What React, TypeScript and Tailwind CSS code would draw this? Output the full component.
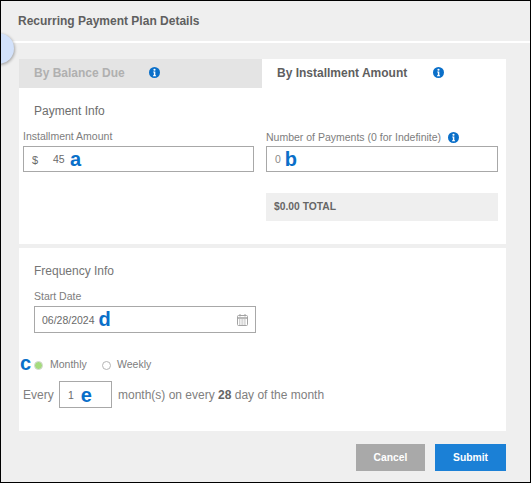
const font = "font-['Liberation_Sans',Arial,sans-serif]";

function Info({ size = 11 }: { size?: number }) {
  return (
    <svg width={size} height={size} viewBox="0 0 12 12" className="shrink-0">
      <circle cx="6" cy="6" r="6" fill="#0a6fc9" />
      <circle cx="6" cy="3" r="1.2" fill="#fff" />
      <path d="M4.6 5h2.3v4h.8v1H4.4V9h.9V6h-.7z" fill="#fff" />
    </svg>
  );
}

function Mark({ children }: { children: string }) {
  return <span className="text-[20px] leading-none font-bold text-[#0a6fc9] relative top-[-1px]">{children}</span>;
}

export default function App() {
  return (
    <div className={`${font} relative w-[531px] h-[483px] overflow-hidden bg-[#efefef] border-t border-l border-r border-b border-black text-[#757575]`}>
      <div className="absolute left-[-18px] top-[32px] w-[31px] h-[31px] rounded-full bg-[#d3e2fb] shadow-[1px_1px_3px_rgba(0,0,0,0.3)]" />
      <div className="h-[40px] pl-[17px] flex items-center text-[12px] font-bold text-[#5f5f5f] border-b-[2px] border-white box-content">
        Recurring Payment Plan Details
      </div>
      <div className="ml-[18px] mr-[24px] mt-[16px]">
        <div className="bg-white">
          <div className="flex h-[29px]">
            <div className="w-[243px] bg-[#e4e4e4] flex items-center pl-[15px] pb-[2px] text-[12px] font-bold text-[#b0b0b0]">
              <span className="w-[115px]">By Balance Due</span>
              <Info />
            </div>
            <div className="flex-1 flex items-center pl-[15px] pb-[2px] text-[12px] font-bold text-[#5f5f5f]">
              <span className="w-[156px]">By Installment Amount</span>
              <Info />
            </div>
          </div>
          <div className="h-[156px] pt-[15px]">
            <div className="pl-[15px] text-[12px] leading-[16px] text-[#6e6e6e]">Payment Info</div>
            <div className="flex mt-[11px] pl-[4px]">
              <div className="w-[243px]">
                <div className="text-[10.5px] leading-[12px] h-[16px] text-[#7d7d7d]">Installment Amount</div>
                <div className="w-[231px] h-[26px] border border-[#a8a8a8] flex items-center pl-[8px] pt-[2px] text-[10.5px] text-[#6a6a6a]">
                  <span className="text-[11px] w-[21px]">$</span>
                  <span className="w-[17px]">45</span>
                  <Mark>a</Mark>
                </div>
              </div>
              <div className="w-[232px]">
                <div className="flex items-center gap-[7px] text-[10.5px] leading-[12px] h-[16px] pb-[2px] text-[#7d7d7d]">
                  <span>Number of Payments (0 for Indefinite)</span>
                  <Info />
                </div>
                <div className="h-[26px] border border-[#a8a8a8] flex items-center pl-[8px] pt-[2px] gap-[4px] text-[10.5px] text-[#8a8a8a]">
                  <span>0</span>
                  <Mark>b</Mark>
                </div>
                <div className="h-[28px] mt-[21px] bg-[#efefef] flex items-center pl-[8px] text-[10.3px] font-bold text-[#666666]">
                  $0.00 TOTAL
                </div>
              </div>
            </div>
          </div>
        </div>
        <div className="bg-white mt-[4px] h-[183px] pt-[15px]">
          <div className="pl-[15px] text-[12px] leading-[16px] text-[#757575]">Frequency Info</div>
          <div className="pl-[15px] mt-[11px] text-[10.5px] leading-[12px] h-[12px] text-[#7d7d7d]">Start Date</div>
          <div className="ml-[15px] mt-[4px] w-[222px] h-[27px] border border-[#a8a8a8] flex items-center pl-[7px] pr-[7px] pt-[2px] text-[10.5px] text-[#6a6a6a]">
            <span>06/28/2024</span>
            <span className="ml-[4px]"><Mark>d</Mark></span>
            <svg width="11" height="12" viewBox="0 0 11 12" className="ml-auto relative top-[-1px]" fill="none" stroke="#a3a3a3">
              <rect x="0.5" y="1.5" width="10" height="10" rx="1" />
              <path d="M0.5 4h10" strokeWidth="1.5" />
              <path d="M3 0v2.5M8 0v2.5M2 6h7M2 8h7M2 10h7" strokeWidth="1" strokeDasharray="1 0.6" />
            </svg>
          </div>
          <div className="flex items-center mt-[21px] h-[22px] text-[10.5px] text-[#7d7d7d]">
            <span className="w-[15px] pl-[1px]"><Mark>c</Mark></span>
            <span className="w-[9px] h-[9px] rounded-full bg-[#a5dc7d] border border-[#d8d8d8]" />
            <span className="ml-[7px] w-[52px]">Monthly</span>
            <span className="w-[9px] h-[9px] rounded-full bg-white border border-[#b5b5b5]" />
            <span className="ml-[6px]">Weekly</span>
          </div>
          <div className="flex items-center mt-[5px] pl-[4px] text-[12px] text-[#808080]">
            <span className="w-[36px]">Every</span>
            <div className="w-[53px] h-[27px] border border-[#a8a8a8] flex items-center pl-[8px] pt-[2px] gap-[7px] text-[10.5px] text-[#6a6a6a]">
              <span>1</span>
              <Mark>e</Mark>
            </div>
            <span className="ml-[6px]">month(s) on every <b className="text-[#666666]">28</b> day of the month</span>
          </div>
        </div>
        <div className="flex justify-end gap-[10px] mt-[13px]">
          <button className="w-[69px] h-[27px] bg-[#a9a9a9] text-white text-[10.3px] font-bold">Cancel</button>
          <button className="w-[71px] h-[27px] bg-[#1b80d6] text-white text-[10.3px] font-bold">Submit</button>
        </div>
      </div>
    </div>
  );
}
